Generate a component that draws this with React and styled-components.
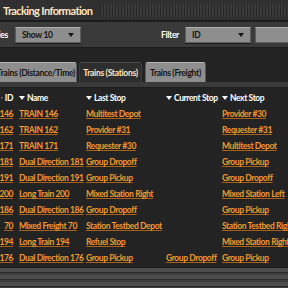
import styled, { createGlobalStyle } from 'styled-components';

const GlobalStyle = createGlobalStyle`
  html, body {
    margin: 0;
    padding: 0;
    background: #242324;
  }
  body {
    font-family: Lato, "Open Sans", sans-serif;
    font-weight: 700;
  }
`;

const Frame = styled.div`
  width: 288px;
  height: 288px;
  overflow: hidden;
  display: flex;
  flex-direction: column;
  background: #242324;
`;

const TitleBar = styled.div`
  height: 20px;
  flex: none;
  display: flex;
  align-items: center;
  gap: 8px;
  padding-left: 3px;
  background: #303030;
  border-bottom: 2px solid #1c1c1c;
`;

const Title = styled.div`
  color: #ffe6c0;
  font-size: 11px;
  letter-spacing: -0.6px;
  white-space: nowrap;
`;

const DragHandle = styled.div`
  flex: 1;
  height: 13px;
  background: repeating-linear-gradient(
    90deg,
    #262626 0px,
    #262626 1px,
    #3a3a3a 1px,
    #3a3a3a 3px
  );
`;

const FilterRow = styled.div`
  height: 25px;
  flex: none;
  display: flex;
  align-items: center;
  background: #3b3a3b;
  border-bottom: 1px solid #1c1c1c;
  font-size: 8.5px;
  letter-spacing: -0.3px;
`;

const Label = styled.span`
  width: ${({ $w }) => $w}px;
  margin-left: ${({ $offset }) => $offset || 0}px;
  text-align: right;
  flex: none;
  color: #fff;
  white-space: nowrap;
`;

const Dropdown = styled.div`
  width: ${({ $w }) => $w}px;
  height: 16px;
  box-sizing: border-box;
  display: flex;
  align-items: center;
  justify-content: space-between;
  margin-left: ${({ $ml }) => $ml}px;
  padding: 0 6px 0 6px;
  background: #8e8e8e;
  border: 1px solid #5c5c5c;
  border-top-color: #b0b0b0;
  box-shadow: 0 1px 0 #1c1c1c;
  color: #141414;
  flex: none;
`;

const TextField = styled.div`
  width: 60px;
  height: 16px;
  box-sizing: border-box;
  margin-left: 4px;
  background: #8e8e8e;
  border: 1px solid #5c5c5c;
  border-top-color: #b0b0b0;
  flex: none;
`;

const TabBar = styled.div`
  height: 34px;
  flex: none;
  display: flex;
  align-items: flex-end;
  gap: 2px;
  margin-left: -5px;
  background: #242324;
  font-size: 8.5px;
  letter-spacing: -0.3px;
`;

const Tab = styled.div`
  width: ${({ $w }) => $w}px;
  height: 20px;
  box-sizing: border-box;
  display: flex;
  align-items: center;
  justify-content: center;
  margin-right: ${({ $mr }) => $mr || 0}px;
  border-radius: 3px 3px 0 0;
  white-space: nowrap;
  background: ${({ $active }) => ($active ? '#2f2e2f' : '#8e8e8e')};
  color: ${({ $active }) => ($active ? '#ffe6c0' : '#141414')};
  border: 1px solid ${({ $active }) => ($active ? '#3d3d3d' : '#5c5c5c')};
  border-top-color: ${({ $active }) => ($active ? '#4a4a4a' : '#b4b4b4')};
  border-bottom: none;
`;

const TabFloor = styled.div`
  height: 5px;
  flex: none;
  background: #3c3b3c;
  border-bottom: 1px solid #1c1c1c;
`;

const Table = styled.div`
  flex: none;
  display: grid;
  grid-template-columns: 18px 67px 80px 56px 1fr;
  grid-auto-rows: 16px;
  margin-top: 2px;
  font-size: 8.5px;
  letter-spacing: -0.4px;
`;

const HeadCell = styled.div`
  display: flex;
  align-items: center;
  justify-content: ${({ $right }) => ($right ? 'flex-end' : 'flex-start')};
  gap: 2px;
  padding-left: 1px;
  padding-right: ${({ $right }) => ($right ? 5 : 0)}px;
  color: #fff;
  white-space: nowrap;
`;

const Cell = styled.div`
  display: flex;
  align-items: center;
  justify-content: ${({ $right }) => ($right ? 'flex-end' : 'flex-start')};
  padding-left: 1px;
  padding-right: ${({ $right }) => ($right ? 5 : 0)}px;
  white-space: nowrap;
`;

const Link = styled.span`
  color: #f39a2c;
  text-decoration: underline;
  text-decoration-color: #a9601a;
  text-underline-offset: 1px;
`;

const Footer = styled.div`
  flex: 1;
  margin-top: 1px;
  border-top: 1px solid #161616;
  background: repeating-linear-gradient(
    180deg,
    #4e4d4e 0px,
    #4e4d4e 4px,
    #2c2c2c 4px,
    #2c2c2c 5px,
    #3e3d3e 5px,
    #3e3d3e 7px
  );
`;

const Arrow = ({ color = '#fff' }) => (
  <svg width="6" height="4" viewBox="0 0 6 4">
    <path d="M0 0h6L3 4z" fill={color} />
  </svg>
);

const rows = [
  ['146', 'TRAIN 146', 'Multitest Depot', '', 'Provider #30'],
  ['162', 'TRAIN 162', 'Provider #31', '', 'Requester #31'],
  ['171', 'TRAIN 171', 'Requester #30', '', 'Multitest Depot'],
  ['181', 'Dual Direction 181', 'Group Dropoff', '', 'Group Pickup'],
  ['191', 'Dual Direction 191', 'Group Pickup', '', 'Group Dropoff'],
  ['200', 'Long Train 200', 'Mixed Station Right', '', 'Mixed Station Left'],
  ['186', 'Dual Direction 186', 'Group Dropoff', '', 'Group Pickup'],
  ['70', 'Mixed Freight 70', 'Station Testbed Depot', '', 'Station Testbed Right'],
  ['194', 'Long Train 194', 'Refuel Stop', '', 'Mixed Station Right'],
  ['176', 'Dual Direction 176', 'Group Pickup', 'Group Dropoff', 'Group Pickup'],
];

const headers = ['ID', 'Name', 'Last Stop', 'Current Stop', 'Next Stop'];

export default function App() {
  return (
    <>
      <GlobalStyle />
      <Frame>
        <TitleBar>
          <Title>Tracking Information</Title>
          <DragHandle />
        </TitleBar>
        <FilterRow>
          <Label $w={40} $offset={-32}>
            Entries
          </Label>
          <Dropdown $w={66} $ml={7}>
            Show 10
            <Arrow color="#141414" />
          </Dropdown>
          <Label $w={98}>Filter</Label>
          <Dropdown $w={66} $ml={6}>
            ID
            <Arrow color="#141414" />
          </Dropdown>
          <TextField />
        </FilterRow>
        <TabBar>
          <Tab $w={82}>Trains (Distance/Time)</Tab>
          <Tab $w={63} $active $mr={1}>
            Trains (Stations)
          </Tab>
          <Tab $w={61}>Trains (Freight)</Tab>
        </TabBar>
        <TabFloor />
        <Table>
          {headers.map((h, i) => (
            <HeadCell key={h} $right={i === 0}>
              <Arrow />
              {h}
            </HeadCell>
          ))}
          {rows.map((r) =>
            r.map((c, i) => (
              <Cell key={r[0] + i} $right={i === 0}>
                {c && <Link>{c}</Link>}
              </Cell>
            ))
          )}
        </Table>
        <Footer />
      </Frame>
    </>
  );
}
